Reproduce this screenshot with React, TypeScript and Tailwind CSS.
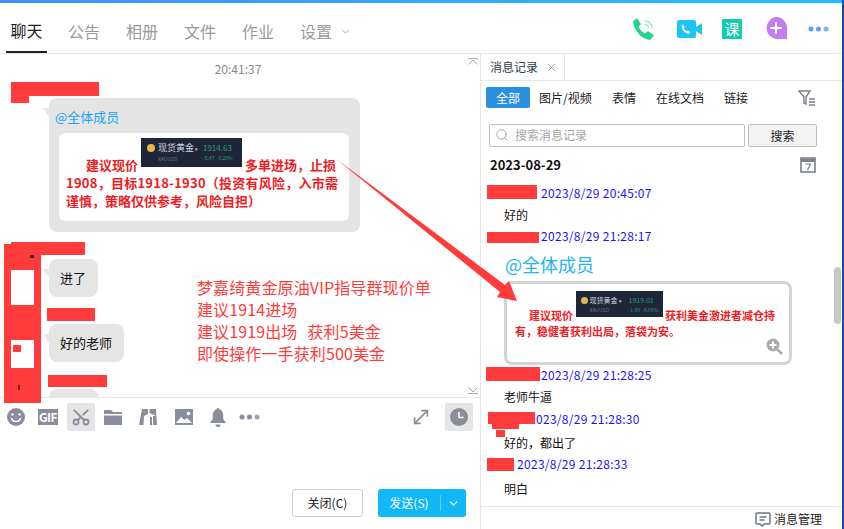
import { X, Search, ChevronDown, MoveDiagonal, Scissors } from "lucide-react";

const CJK = "font-['Noto_Sans_CJK_SC','Noto_Sans',sans-serif]";

const tabs = ["公告", "相册", "文件", "作业"];
const filters = [
  { label: "图片/视频", cls: "ml-[9px] w-[54px]" },
  { label: "表情", cls: "ml-[19px]" },
  { label: "在线文档", cls: "ml-[20px]" },
  { label: "链接", cls: "ml-[20px]" },
];

function QuoteCard({ price, change, percent, compact }: { price: string; change: string; percent: string; compact?: boolean }) {
  return (
    <span className="inline-block overflow-hidden align-[3px] leading-none font-normal tracking-normal text-white">
      <span className={compact ? "flex h-[26px] w-[87px] items-start gap-[2px] bg-[#1e2639] pt-[4px] pl-[5px]" : "flex h-[29px] w-[101px] items-start gap-[3px] bg-[#1e2639] pt-[4px] pl-[6px]"}>
        <span className={compact ? "mt-[2px] h-[7px] w-[7px] rounded-full bg-[#e8b64a]" : "mt-[2px] h-[8px] w-[8px] rounded-full bg-[#e8b64a]"} />
        <span className={compact ? "flex w-[37px] flex-col" : "flex w-[42px] flex-col"}>
          <span className={compact ? "text-[7px] leading-[11px] whitespace-nowrap text-[#d5d8e0]" : "text-[9px] leading-[12px] whitespace-nowrap text-[#d5d8e0]"}>现货黄金<span className="text-[5px]"> ▾</span></span>
          <span className="text-[5px] leading-[8px] text-[#717788]">XAUUSD</span>
        </span>
        <span className="flex flex-col">
          <span className={compact ? "text-[7px] leading-[11px] text-[#2f9e78]" : "text-[8px] leading-[12px] text-[#2f9e78]"}>{price}</span>
          <span className="text-[5px] leading-[8px] whitespace-nowrap text-[#2f9e78]">{change}&nbsp;&nbsp;{percent}</span>
        </span>
      </span>
    </span>
  );
}

function BubbleTail() {
  return (
    <svg className="absolute top-[10px] -left-[6px]" width="6" height="9" viewBox="0 0 6 9" fill="#e8e8e8">
      <path d="M0 0h6v9z" />
    </svg>
  );
}

function Bubble({ text }: { text: string }) {
  return (
    <div className="relative ml-[49px] w-fit rounded-[8px] bg-[#e5e5e5] py-[9px] pr-[12px] pl-[11px] text-[13px] leading-[20px] text-[#111]">
      <BubbleTail />
      {text}
    </div>
  );
}

function RecordHead({ time, pad }: { time: string; pad: string }) {
  return <div className={`text-[12px] leading-[16px] tracking-[0.3px] whitespace-nowrap text-[#1c0fff] ${pad}`}>{time}</div>;
}

function SmileIcon() {
  return (
    <svg width="18" height="18" viewBox="0 0 18 18">
      <circle cx="9" cy="9" r="9" fill="#8a8e9c" />
      <circle cx="5.500" cy="6.500" r="1.300" fill="#fff" />
      <circle cx="12.500" cy="6.500" r="1.300" fill="#fff" />
      <path d="M4.500 10.500a4.800 4.800 0 0 0 9 0" fill="none" stroke="#fff" strokeWidth="1.400" strokeLinecap="round" />
    </svg>
  );
}

function FolderIcon() {
  return (
    <svg width="18" height="16" viewBox="0 0 18 16" fill="#8a8e9c">
      <path d="M0 1h7l2 2h9v2H0z" />
      <path d="M0 6.500h18V16H0z" />
    </svg>
  );
}

function HammerIcon() {
  return (
    <svg width="18" height="16" viewBox="0 0 18 16" fill="#8a8e9c">
      <path d="M3 0h6v5L5 7 4.500 16H0z" />
      <path d="M10.500 0H17l1 16h-4V7h3l-6.500-3z" />
      <path d="M11 8h2v8h-2z" />
    </svg>
  );
}

function PictureIcon() {
  return (
    <svg width="18" height="16" viewBox="0 0 18 16">
      <rect width="18" height="16" fill="#8a8e9c" />
      <path d="M1 14l5-6 3.500 3 2.500-2 5 5z" fill="#fff" />
      <circle cx="13.500" cy="4.500" r="1.800" fill="#fff" />
    </svg>
  );
}

function BellIcon() {
  return (
    <svg width="16" height="19" viewBox="0 0 16 19" fill="#8a8e9c">
      <path d="M8 0a1.500 1.500 0 0 1 1.400 1.200C12 2 13.200 4.200 13.200 7v4l2.300 3v1H.5v-1l2.300-3V7c0-2.800 1.200-5 3.800-5.800A1.500 1.500 0 0 1 8 0z" />
      <path d="M5.500 16.500h5a2.500 2.500 0 0 1-5 0z" />
    </svg>
  );
}

function ClockIcon() {
  return (
    <svg width="18" height="18" viewBox="0 0 18 18">
      <circle cx="9" cy="9" r="9" fill="#8a8e9c" />
      <path d="M9 4v5.500h4.500" fill="none" stroke="#fff" strokeWidth="1.600" />
    </svg>
  );
}

function Dots({ color }: { color: string }) {
  return (
    <svg width="21" height="6" viewBox="0 0 21 6" fill={color}>
      <circle cx="3" cy="3" r="2.500" />
      <circle cx="10.500" cy="3" r="2.500" />
      <circle cx="18" cy="3" r="2.500" opacity="0.8" />
    </svg>
  );
}

export default function App() {
  return (
    <div className={`relative flex h-[529px] w-[844px] flex-col overflow-hidden bg-white ${CJK}`}>
      <div className="h-[3px] shrink-0 bg-gradient-to-r from-[#3f8ff5] to-[#1ec0ff]" />

      {/* top bar */}
      <div className="flex h-[51px] shrink-0 border-b border-[#e6e6e6] pr-[15px] pl-[6px]">
        <div className="flex h-[50px] w-[41px] items-center justify-center border-b-2 border-[#222] pt-[6px] text-[16px] text-[#222]">聊天</div>
        <div className="flex items-center gap-[26px] pt-[6px] pl-[21px] text-[16px] text-[#9a9a9a]">
          {tabs.map(t => <span key={t} className="w-[32px]">{t}</span>)}
          <span className="flex items-center gap-[7px]">设置<ChevronDown size={13} strokeWidth={1.400} className="text-[#999]" /></span>
        </div>
        <div className="ml-auto flex items-center pt-[1px]">
          <svg width="24" height="24" viewBox="0 0 24 24">
            <path d="M5 1l4 6-2.500 2.500c1 3 3.500 5.500 6.500 7l3-2.500 6 4.500-4 4.500C9 22 2 13 1 4.500z" fill="#1fd68a" />
            <path d="M13 4a7 7 0 0 1 7 7M13 7.500a3.500 3.500 0 0 1 3.500 3.500" fill="none" stroke="#9de8c5" strokeWidth="1.500" />
          </svg>
          <svg className="ml-[21px]" width="25" height="18" viewBox="0 0 25 18">
            <rect width="19" height="18" rx="2" fill="#1cc4f7" />
            <path d="M19 7l6-4v12l-6-4z" fill="#1cc4f7" />
            <path d="M6 4.500l2 3-1 1c.5 1.300 1.500 2.300 2.800 2.800l1-1 2.600 2-1.500 1.500C8 13.500 5 10 4.500 6z" fill="#fff" />
          </svg>
          <span className="ml-[20px] flex h-[20px] w-[20px] items-center justify-center rounded-[1px] bg-[#12cdb4] text-[15px] leading-none text-white">课</span>
          <svg className="ml-[23px]" width="22" height="23" viewBox="0 0 22 23">
            <path d="M11 0a11 11 0 0 1 11 11v11h-7.500A11 11 0 1 1 11 0z" fill="#c77bf0" />
            <path d="M11 6v10M6 11h10" stroke="#fff" strokeWidth="2" strokeLinecap="round" />
          </svg>
          <span className="ml-[21px] flex"><Dots color="#5b9cf5" /></span>
        </div>
      </div>

      <div className="flex min-h-0 flex-1 pr-[2px]">
        {/* chat column */}
        <div className="flex w-[481px] shrink-0 flex-col border-r border-[#e6e6e6]">
          <div className="relative h-[344px] shrink-0 overflow-hidden border-b border-[#e6e6e6]">
            <div className="pt-[7px] pr-[4px] text-center text-[12px] leading-[16px] text-[#888]">20:41:37</div>
            <svg className="absolute top-[4px] right-[2px]" width="10" height="7" viewBox="0 0 10 7" fill="none" stroke="#aaa">
              <path d="M0 .5h10M.5 6.500L5 2l4.500 4.500" />
            </svg>
            <svg className="absolute right-[2px] bottom-[3px]" width="10" height="7" viewBox="0 0 10 7" fill="none" stroke="#aaa">
              <path d="M0 6.500h10M.5 .5L5 5l4.500-4.500" />
            </svg>

            <div className="relative mt-[21px] ml-[49px] h-[134px] w-[311px] rounded-[8px] bg-[#e4e4e4] pt-[9px] pl-[6px]">
              <BubbleTail />
              <div className="text-[13px] leading-[20px] text-[#1aa5ee]">@全体成员</div>
              <div className="mt-[6px] ml-[4px] h-[88px] w-[290px] rounded-[6px] bg-white px-[7px] pt-[5px] text-[13px] leading-[18px] font-bold text-[#ee1c25]">
                <span className="pl-[20px]">建议现价 </span>
                <QuoteCard price="1914.63" change="-5.47" percent="-0.28%" />
                <span> 多单进场，止损</span>
                <br /><span className="tracking-[0.25px]">1908，目标1918-1930（投资有风险，入市需</span>
                <br />谨慎，策略仅供参考，风险自担）
              </div>
            </div>

            <div className="mt-[27px]"><Bubble text="进了" /></div>
            <div className="mt-[27px]"><Bubble text="好的老师" /></div>
            <div className="mt-[27px] ml-[49px] h-[20px] w-[49px] rounded-t-[8px] bg-[#e5e5e5]" />
          </div>

          {/* input toolbar */}
          <div className="flex h-[36px] shrink-0 items-center pt-[2px] pl-[7px]">
            <span className="flex w-[31px] justify-start"><SmileIcon /></span>
            <span className="flex h-[16px] w-[20px] items-center justify-center bg-[#8a8e9c] text-[12px] font-bold tracking-[-0.5px] text-white">GIF</span>
            <span className="ml-[9px] flex h-[28px] w-[28px] items-center justify-center rounded-[2px] bg-[#e5e5e5]">
              <Scissors size={20} strokeWidth={2.200} className="-rotate-90 text-[#8a8e9c]" />
            </span>
            <span className="ml-[9px] flex w-[35px]"><FolderIcon /></span>
            <span className="flex w-[36px]"><HammerIcon /></span>
            <span className="flex w-[35px]"><PictureIcon /></span>
            <span className="flex w-[29px]"><BellIcon /></span>
            <span className="flex"><Dots color="#8a8e9c" /></span>
            <MoveDiagonal size={22} strokeWidth={1.800} className="ml-auto text-[#8a8e9c]" />
            <span className="mr-[7px] ml-[13px] flex h-[28px] w-[28px] items-center justify-center rounded-[2px] bg-[#e5e5e5]"><ClockIcon /></span>
          </div>

          {/* send row */}
          <div className="flex flex-1 items-end justify-end gap-[15px] pr-[14px] pb-[12px]">
            <button className="h-[28px] w-[71px] rounded-[3px] border border-[#cfcfcf] bg-white text-[12px] text-[#222]">关闭(C)</button>
            <div className="flex h-[28px] w-[88px] items-center rounded-[3px] bg-[#12b7f5] text-[12px] text-white">
              <span className="w-[62px] text-center">发送(S)</span>
              <span className="h-[16px] w-px bg-[#5fd0fa]" />
              <ChevronDown size={13} className="ml-[6px]" />
            </div>
          </div>
        </div>

        {/* message history */}
        <div className="relative flex min-w-0 flex-1 flex-col">
          <div className="flex h-[27px] shrink-0 border-b border-[#e6e6e6]">
            <div className="flex w-[84px] items-center gap-[7px] border-r border-[#e6e6e6] pl-[9px] text-[12px] text-[#2c3a4b]">
              消息记录<X size={13} strokeWidth={1.300} className="text-[#888]" />
            </div>
          </div>

          <div className="mt-[6px] flex h-[21px] items-center pl-[5px] text-[12px] text-[#222]">
            <span className="flex h-[21px] w-[44px] items-center justify-center rounded-[2px] bg-[#2b8fe0] text-white">全部</span>
            {filters.map(f => <span key={f.label} className={`whitespace-nowrap ${f.cls}`}>{f.label}</span>)}
            <svg className="mr-[26px] ml-auto" width="18" height="16" viewBox="0 0 18 16" fill="none" stroke="#7b8089">
              <path d="M1 1h11L8 7v7l-2-1V7z" strokeWidth="1.400" />
              <path d="M11 9h6M11 12h6M11 15h6" strokeWidth="1.400" />
            </svg>
          </div>

          <div className="mt-[16px] flex h-[23px] pl-[8px]">
            <div className="flex w-[256px] items-center gap-[6px] rounded-[2px] border border-[#bdbdbd] pb-[1px] pl-[5px] text-[12px] text-[#a5a5a5]">
              <Search size={14} strokeWidth={1.200} className="text-[#888]" />搜索消息记录
            </div>
            <button className="ml-[3px] w-[69px] rounded-[2px] border border-[#bdbdbd] bg-[#f3f3f3] text-[12px] text-[#222]">搜索</button>
          </div>

          <div className="mt-[8px] flex h-[20px] items-center pr-[26px] pl-[9px]">
            <span className="text-[13px] font-bold text-[#111]">2023-08-29</span>
            <svg className="ml-auto" width="16" height="16" viewBox="0 0 16 16" fill="none" stroke="#7b8089">
              <rect x="1" y="1" width="14" height="14" strokeWidth="1.600" />
              <path d="M1 3.500h14" strokeWidth="3" />
              <path d="M5.500 7h5L7.500 13" strokeWidth="1.200" />
            </svg>
          </div>

          <div className="mt-[10px] min-h-0 flex-1 overflow-hidden">
            <RecordHead time="2023/8/29 20:45:07" pad="pl-[60px]" />
            <div className="mt-[6px] pl-[23px] text-[12px] leading-[16px] text-[#111]">好的</div>
            <RecordHead time="2023/8/29 21:28:17" pad="mt-[5px] pl-[60px]" />
            <div className="mt-[8px] pl-[24px] text-[18px] leading-[24px] text-[#1fb5f0]">@全体成员</div>
            <div className="mt-[5px] ml-[23px] h-[84px] w-[288px] rounded-[8px] border-[3px] border-[#d4d4d4] px-[8px] pt-[7px] text-[11px] leading-[16px] font-bold text-[#ee1c25]">
              <span className="pl-[14px]">建议现价 </span>
              <QuoteCard price="1919.01" change="-1.09" percent="-0.06%" compact />
              <span> 获利美金激进者减仓持</span>
              <br />有，稳健者获利出局，落袋为安。
            </div>
            <RecordHead time="2023/8/29 21:28:25" pad="mt-[2px] pl-[60px]" />
            <div className="mt-[6px] pl-[23px] text-[12px] leading-[16px] text-[#111]">老师牛逼</div>
            <RecordHead time="2023/8/29 21:28:30" pad="mt-[6px] pl-[48px]" />
            <div className="mt-[8px] pl-[23px] text-[12px] leading-[16px] text-[#111]">好的，都出了</div>
            <RecordHead time="2023/8/29 21:28:33" pad="mt-[5px] pl-[36px]" />
            <div className="mt-[9px] pl-[23px] text-[12px] leading-[16px] text-[#111]">明白</div>
          </div>

          <div className="flex h-[23px] shrink-0 items-center justify-end gap-[3px] border-t border-[#e6e6e6] pt-[2px] pr-[20px] text-[12px] text-[#222]">
            <svg width="16" height="15" viewBox="0 0 16 15" fill="none" stroke="#6d7480" strokeWidth="1.500">
              <path d="M2 1h12a1 1 0 0 1 1 1v9a1 1 0 0 1-1 1H9l-2 2-2-2H2a1 1 0 0 1-1-1V2a1 1 0 0 1 1-1z" />
              <path d="M4.500 5h7M4.500 8h5" />
            </svg>
            消息管理
          </div>

          {/* scrollbar thumb */}
          <span className="absolute top-[213px] right-[1px] h-[57px] w-[7px] rounded-full bg-[#c8c8c8]" />
          {/* zoom badge on the picture */}
          <svg className="absolute top-[284px] left-[285px]" width="17" height="17" viewBox="0 0 17 17">
            <circle cx="7" cy="7" r="6.500" fill="#aaa" />
            <path d="M7 3.500v7M3.500 7h7" stroke="#fff" strokeWidth="2" />
            <path d="M11.500 11.500l4.500 4.500" stroke="#aaa" strokeWidth="2.500" />
          </svg>
        </div>
      </div>

      <span className="absolute top-0 right-0 bottom-0 w-[2px] bg-[#0f4fa8]" />

      {/* red annotations laid over the window */}
      <span className="absolute top-[82px] left-[11px] h-[14px] w-[88px] bg-[#ff3b3b]" />
      <span className="absolute top-[96px] left-[11px] h-[7px] w-[18px] bg-[#ff3b3b]" />
      <span className="absolute top-[242px] left-[11px] h-[13px] w-[74px] bg-[#ff3b3b]" />
      <span className="absolute top-[244px] left-[4px] h-[159px] w-[37px] bg-[#ff3b3b]" />
      <span className="absolute top-[255px] left-[30px] h-[3px] w-[4px] bg-[#222]" />
      <span className="absolute top-[270px] left-[11px] h-[35px] w-[23px] bg-white" />
      <span className="absolute top-[340px] left-[11px] h-[28px] w-[23px] bg-white" />
      <span className="absolute top-[345px] left-[13px] h-[7px] w-[8px] bg-[#ff3b3b]" />
      <span className="absolute top-[385px] left-[18px] h-[5px] w-[2px] bg-[#7a1a1a]" />
      <span className="absolute top-[308px] left-[47px] h-[13px] w-[48px] bg-[#ff3b3b]" />
      <span className="absolute top-[375px] left-[48px] h-[12px] w-[59px] bg-[#ff3b3b]" />
      <span className="absolute top-[185px] left-[487px] h-[14px] w-[50px] bg-[#ff3b3b]" />
      <span className="absolute top-[232px] left-[487px] h-[11px] w-[52px] bg-[#ff3b3b]" />
      <span className="absolute top-[367px] left-[486px] h-[14px] w-[54px] bg-[#ff3b3b]" />
      <span className="absolute top-[412px] left-[488px] h-[12px] w-[47px] bg-[#ff3b3b]" />
      <span className="absolute top-[424px] left-[492px] h-[5px] w-[27px] bg-[#ff3b3b]" />
      <span className="absolute top-[430px] left-[496px] h-[7px] w-[9px] bg-[#ff3b3b]" />
      <span className="absolute top-[458px] left-[487px] h-[13px] w-[27px] bg-[#ff3b3b]" />

      <div className="absolute top-[276px] left-[197px] text-[16px] leading-[22px] tracking-[0.12px] text-[#ff3b3b]">
        <div>梦嘉绮黄金原油VIP指导群现价单</div>
        <div>建议1914进场</div>
        <div>建议1919出场<span className="ml-[10px]">获利5美金</span></div>
        <div>即使操作一手获利500美金</div>
      </div>

      <svg className="absolute top-0 left-0" width="844" height="529" viewBox="0 0 844 529">
        <path d="M335 158L505 285 509 281 517 301 497 297 500 292z" fill="#ff3b3b" />
      </svg>
    </div>
  );
}
